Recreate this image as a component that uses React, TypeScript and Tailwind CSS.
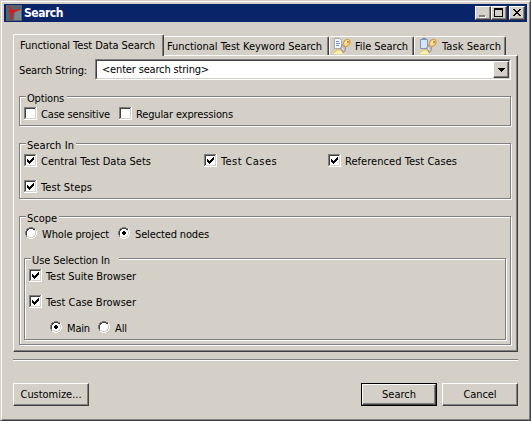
import React, { useLayoutEffect, useRef } from "react";

function Label({ children, fit, className = "" }: { children: string; fit: number; className?: string }) {
  const ref = useRef<HTMLSpanElement>(null);
  useLayoutEffect(() => {
    const el = ref.current;
    if (!el) return;
    el.style.letterSpacing = "0px";
    const natural = el.getBoundingClientRect().width;
    el.style.letterSpacing = `${(fit - natural) / children.length}px`;
  }, [children, fit]);
  return (
    <span ref={ref} className={`inline-block shrink-0 whitespace-pre leading-[13px] ${className}`}>
      {children}
    </span>
  );
}

function Check({ label, fit, checked = false, className = "" }: { label: string; fit: number; checked?: boolean; className?: string }) {
  return (
    <div className={`flex h-[13px] items-start ${className}`}>
      <svg width="13" height="13" className="mr-1 shrink-0" shapeRendering="crispEdges">
        <path fill="#fff" d="M0 0h13v13H0z" />
        <path fill="#808080" d="M0 0h12v1H1v11H0z" />
        <path fill="#404040" d="M1 1h10v1H2v9H1z" />
        <path fill="#d4d0c8" d="M11 1h1v11H1v-1h10z" />
        {checked && <path d="M3 5h1v1h1v1h1v-1h1v-1h1v-1h1v-1h1v3h-1v1h-1v1h-1v1h-1v1h-1v-1h-1v-1h-1z" />}
      </svg>
      <Label fit={fit} className="mt-px">{label}</Label>
    </div>
  );
}

function Radio({ label, fit, checked = false, className = "" }: { label: string; fit: number; checked?: boolean; className?: string }) {
  return (
    <div className={`flex h-3 items-start ${className}`}>
      <svg width="12" height="12" className="mr-[5px] shrink-0" shapeRendering="crispEdges">
        <path fill="#fff" d="M4 1h4v1h2v2h1v4h-1v2H8v1H4v-1H2V8H1V4h1V2h2z" />
        <path fill="#808080" d="M4 0h4v1H4zM2 1h2v1H2zM8 1h2v1H8zM1 2h1v2H1zM0 4h1v4H0zM1 8h1v2H1z" />
        <path fill="#404040" d="M4 1h4v1H4zM2 2h2v1H3v1H2zM8 2h2v1H8zM1 4h1v4H1z" />
        <path fill="#d4d0c8" d="M9 3h1v1H9zM10 4h1v4h-1zM9 8h1v1H9zM8 9h2v1H8zM4 10h4v1H4zM2 9h2v1H2z" />
        <path fill="#fff" d="M10 2h1v2h-1zM11 4h1v4h-1zM10 8h1v2h-1zM8 10h2v1H8zM4 11h4v1H4zM2 10h2v1H2z" />
        {checked && <path d="M5 4h2v1h1v2H7v1H5V7H4V5h1z" />}
      </svg>
      <Label fit={fit} className="mt-px">{label}</Label>
    </div>
  );
}

function Group({ title, fit, gap, className = "", children }: { title: string; fit: number; gap: string; className?: string; children: React.ReactNode }) {
  return (
    <section className={`relative border border-[#808080] shadow-[1px_1px_0_#fff,inset_1px_1px_0_#fff] ${className}`}>
      <div className={`absolute left-[6px] -top-[6px] h-[13px] bg-[#d4d0c8] pl-px ${gap}`}>
        <Label fit={fit}>{title}</Label>
      </div>
      {children}
    </section>
  );
}

const raised = "border border-t-white border-l-white border-r-[#404040] border-b-[#404040] shadow-[inset_-1px_-1px_0_#808080]";

function PushButton({ label, fit, primary = false }: { label: string; fit: number; primary?: boolean }) {
  return (
    <button className={`flex h-[23px] w-[76px] ${primary ? "border border-black" : ""}`}>
      <span className={`flex h-full w-full items-center justify-center ${raised}`}>
        <Label fit={fit}>{label}</Label>
      </span>
    </button>
  );
}

function Torch({ clipboard = false }: { clipboard?: boolean }) {
  return (
    <svg width="17" height="17" viewBox="0 0 17 17" className="shrink-0">
      {clipboard ? (
        <>
          <path fill="#d5e4fa" stroke="#7f95c6" d="M.5 1.5h7v9h-7z" />
          <path fill="#8090b0" d="M2 0h4v2H2z" />
        </>
      ) : (
        <>
          <path fill="#f4f8ff" stroke="#a9ab98" d="M.5.5h5l2 2v8h-7z" />
          <path stroke="#6c92cf" d="M2 3.5h3M2 5.5h4M2 7.5h3" />
        </>
      )}
      <path fill="#fff0a8" d="M0 16c0-3 3-5 7-4l2 4z" />
      <path fill="none" stroke="#e6b84c" d="M.5 14.5C2 12 4.500 11.500 7 12" />
      <path fill="#fbd37a" stroke="#d58f35" d="M9 6.500 10.500 2.500 13.500 1l2.500 1.500V5l-1.500 2.500L11.500 9z" />
      <path stroke="#fff6d4" strokeWidth="1.5" d="m11 5.500 2.500-2.500" />
      <circle cx="14" cy="4" r=".9" fill="#b87325" />
      <path fill="#c5c3c6" stroke="#858187" strokeWidth=".8" d="m6.500 10 2-3 3 2.500-.5 3.500-2 1.500z" />
      <path stroke="#eeedef" d="m8 10 1.500 2" />
    </svg>
  );
}

export default function App() {
  return (
    <main className="h-[421px] w-[531px] bg-[#d4d0c8] font-['DejaVu_Sans_Condensed','DejaVu_Sans',sans-serif] text-[11px] text-black [font-stretch:condensed] border border-t-[#d4d0c8] border-l-[#d4d0c8] border-r-[#404040] border-b-[#404040] shadow-[inset_1px_1px_0_#fff,inset_-1px_-1px_0_#808080] px-3 pt-[3px]">
      <header className="-mx-[9px] flex h-[18px] items-center bg-[#0a246a] pl-[2px] pr-[2px]">
        <svg width="16" height="16" className="mr-[2px]">
          <path fill="#56636e" d="M0 0h16v16H0z" />
          <path fill="#7b8991" d="M9 5h6v10H8z" />
          <path fill="#d0201c" d="M2 1h2l1.500 3L7 5l7-1v1L8 7.500 6.500 10 6 15H4.500V9L2 6l2-1z" />
        </svg>
        <Label fit={39} className="text-[12px] font-bold text-white">Search</Label>
        <div className="ml-auto flex">
          <div className={`h-[14px] w-4 bg-[#d4d0c8] ${raised}`}>
            <svg width="14" height="12" shapeRendering="crispEdges"><path fill="#fff" d="M4 9h6v2H4z" /><path fill="#808080" d="M3 8h6v2H3z" /></svg>
          </div>
          <div className={`h-[14px] w-4 bg-[#d4d0c8] ${raised}`}>
            <svg width="14" height="12" shapeRendering="crispEdges"><path fillRule="evenodd" d="M2 1h9v9H2zM3 3v6h7V3z" /></svg>
          </div>
          <div className={`ml-[2px] h-[14px] w-4 bg-[#d4d0c8] ${raised}`}>
            <svg width="14" height="12" shapeRendering="crispEdges"><path d="M3 2h2v1h1v1h2V3h1V2h2v1h-1v1H9v1H8v1h1v1h1v1h1v1H9V8H8V7H6v1H5v1H3V8h1V7h1V6h1V5H5V4H4V3H3z" /></svg>
          </div>
        </div>
      </header>

      <nav className="mt-3 flex h-[21px] items-end">
        <div className="relative z-10 -mb-px flex h-[22px] w-[151px] rounded-t-[2px] border border-b-0 border-t-white border-l-white border-r-[#404040] bg-[#d4d0c8] pl-[6px] pt-1 shadow-[inset_-1px_0_0_#808080]">
          <Label fit={135}>Functional Test Data Search</Label>
        </div>
        <div className="flex h-[19px] w-[165px] items-center rounded-tr-[2px] border-r border-t border-r-[#404040] border-t-white pl-[3px] pt-px shadow-[inset_-1px_0_0_#808080]">
          <Label fit={155}>Functional Test Keyword Search</Label>
        </div>
        <div className="flex h-[19px] w-[85px] items-center rounded-t-[2px] border border-b-0 border-t-white border-l-white border-r-[#404040] pl-1 pt-px shadow-[inset_-1px_0_0_#808080]">
          <Torch />
          <Label fit={53} className="ml-1">File Search</Label>
        </div>
        <div className="flex h-[19px] w-[92px] items-center rounded-t-[2px] border border-b-0 border-t-white border-l-white border-r-[#404040] pl-[5px] pt-px shadow-[inset_-1px_0_0_#808080]">
          <Torch clipboard />
          <Label fit={59} className="ml-[5px]">Task Search</Label>
        </div>
      </nav>

      <div className={`h-[297px] w-[505px] pl-[5px] pt-[3px] ${raised}`}>
        <div className="flex h-[21px] items-center">
          <Label fit={68} className="mt-[2px] mr-2">Search String:</Label>
          <div className="flex h-[21px] w-[416px] border border-t-[#808080] border-l-[#808080] border-r-white border-b-white bg-white">
            <div className="flex flex-1 items-center border border-t-[#404040] border-l-[#404040] border-r-[#d4d0c8] border-b-[#d4d0c8] pl-[5px]">
              <Label fit={107}>{"<enter search string>"}</Label>
              <div className={`ml-auto flex h-[17px] w-4 items-center justify-center bg-[#d4d0c8] ${raised}`}>
                <svg width="7" height="4" shapeRendering="crispEdges"><path d="M0 0h7v1H6v1H5v1H4v1H3V3H2V2H1V1H0z" /></svg>
              </div>
            </div>
          </div>
        </div>

        <Group title="Options" fit={37} gap="w-[41px]" className="mt-4 h-[30px] w-[492px] pl-1 pt-[10px]">
          <div className="flex">
            <Check label="Case sensitive" fit={69} className="w-[95px]" />
            <Check label="Regular expressions" fit={97} />
          </div>
        </Group>

        <Group title="Search In" fit={47} gap="w-[50px]" className="mt-[17px] h-[56px] w-[492px] pl-1 pt-[10px]">
          <div className="flex">
            <Check checked label="Central Test Data Sets" fit={110} className="w-[180px]" />
            <Check checked label="Test Cases" fit={56} className="w-[124px]" />
            <Check checked label="Referenced Test Cases" fit={112} />
          </div>
          <Check checked label="Test Steps" fit={51} className="mt-[13px]" />
        </Group>

        <Group title="Scope" fit={30} gap="w-[33px]" className="mt-[17px] h-[129px] w-[492px] pl-[5px] pt-[10px]">
          <div className="flex">
            <Radio label="Whole project" fit={67} className="w-[93px]" />
            <Radio checked label="Selected nodes" fit={74} />
          </div>
          <Group title="Use Selection In" fit={78} gap="w-[88px]" className="-ml-px mt-[19px] h-[82px] w-[482px] pl-1 pt-[10px]">
            <Check checked label="Test Suite Browser" fit={90} />
            <Check checked label="Test Case Browser" fit={90} className="mt-[13px]" />
            <div className="ml-[21px] mt-[13px] flex">
              <Radio checked label="Main" fit={23} className="w-12" />
              <Radio label="All" fit={12} />
            </div>
          </Group>
        </Group>
      </div>

      <div className="mt-[7px] h-[2px] w-[505px] border-b border-t border-b-white border-t-[#808080]" />
      <footer className="mt-[22px] flex w-[505px]">
        <PushButton label="Customize..." fit={61} />
        <div className="ml-auto flex gap-[5px]">
          <PushButton primary label="Search" fit={34} />
          <PushButton label="Cancel" fit={33} />
        </div>
      </footer>
    </main>
  );
}
